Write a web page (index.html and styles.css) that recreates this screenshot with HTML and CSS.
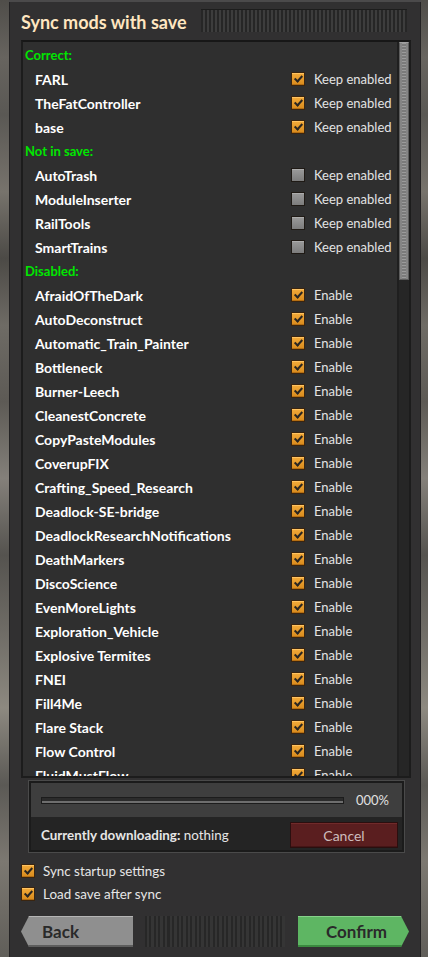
FILE: index.html
```html
<!DOCTYPE html>
<html>
<head>
<meta charset="utf-8">
<link rel="stylesheet" href="styles.css">
</head>
<body>
<div class="window">
  <div class="titlebar">
    <h1 class="title">Sync mods with save</h1>
    <div class="handle"></div>
  </div>
  <div class="list">
    <div class="rows">
      <div class="heading">Correct:</div>
      <div class="row"><span class="name">FARL</span><span class="cb on"></span><span class="label">Keep enabled</span></div>
      <div class="row"><span class="name">TheFatController</span><span class="cb on"></span><span class="label">Keep enabled</span></div>
      <div class="row"><span class="name">base</span><span class="cb on"></span><span class="label">Keep enabled</span></div>
      <div class="heading">Not in save:</div>
      <div class="row"><span class="name">AutoTrash</span><span class="cb"></span><span class="label">Keep enabled</span></div>
      <div class="row"><span class="name">ModuleInserter</span><span class="cb"></span><span class="label">Keep enabled</span></div>
      <div class="row"><span class="name">RailTools</span><span class="cb"></span><span class="label">Keep enabled</span></div>
      <div class="row"><span class="name">SmartTrains</span><span class="cb"></span><span class="label">Keep enabled</span></div>
      <div class="heading">Disabled:</div>
      <div class="row"><span class="name">AfraidOfTheDark</span><span class="cb on"></span><span class="label">Enable</span></div>
      <div class="row"><span class="name">AutoDeconstruct</span><span class="cb on"></span><span class="label">Enable</span></div>
      <div class="row"><span class="name">Automatic_Train_Painter</span><span class="cb on"></span><span class="label">Enable</span></div>
      <div class="row"><span class="name">Bottleneck</span><span class="cb on"></span><span class="label">Enable</span></div>
      <div class="row"><span class="name">Burner-Leech</span><span class="cb on"></span><span class="label">Enable</span></div>
      <div class="row"><span class="name">CleanestConcrete</span><span class="cb on"></span><span class="label">Enable</span></div>
      <div class="row"><span class="name">CopyPasteModules</span><span class="cb on"></span><span class="label">Enable</span></div>
      <div class="row"><span class="name">CoverupFIX</span><span class="cb on"></span><span class="label">Enable</span></div>
      <div class="row"><span class="name">Crafting_Speed_Research</span><span class="cb on"></span><span class="label">Enable</span></div>
      <div class="row"><span class="name">Deadlock-SE-bridge</span><span class="cb on"></span><span class="label">Enable</span></div>
      <div class="row"><span class="name">DeadlockResearchNotifications</span><span class="cb on"></span><span class="label">Enable</span></div>
      <div class="row"><span class="name">DeathMarkers</span><span class="cb on"></span><span class="label">Enable</span></div>
      <div class="row"><span class="name">DiscoScience</span><span class="cb on"></span><span class="label">Enable</span></div>
      <div class="row"><span class="name">EvenMoreLights</span><span class="cb on"></span><span class="label">Enable</span></div>
      <div class="row"><span class="name">Exploration_Vehicle</span><span class="cb on"></span><span class="label">Enable</span></div>
      <div class="row"><span class="name">Explosive Termites</span><span class="cb on"></span><span class="label">Enable</span></div>
      <div class="row"><span class="name">FNEI</span><span class="cb on"></span><span class="label">Enable</span></div>
      <div class="row"><span class="name">Fill4Me</span><span class="cb on"></span><span class="label">Enable</span></div>
      <div class="row"><span class="name">Flare Stack</span><span class="cb on"></span><span class="label">Enable</span></div>
      <div class="row"><span class="name">Flow Control</span><span class="cb on"></span><span class="label">Enable</span></div>
      <div class="row"><span class="name">FluidMustFlow</span><span class="cb on"></span><span class="label">Enable</span></div>
    </div>
    <div class="scrollbar"><div class="thumb"></div></div>
  </div>
  <div class="dl">
    <div class="dl-top">
      <div class="bar"></div>
      <span class="pct">000%</span>
    </div>
    <div class="dl-bottom">
      <span class="status"><b>Currently downloading:</b> nothing</span>
      <button class="cancel">Cancel</button>
    </div>
  </div>
  <div class="opts">
    <div class="opt"><span class="cb on"></span><span>Sync startup settings</span></div>
    <div class="opt"><span class="cb on"></span><span>Load save after sync</span></div>
  </div>
  <div class="buttons">
    <button class="btn back">Back</button>
    <div class="filler"></div>
    <button class="btn confirm">Confirm</button>
  </div>
</div>
</body>
</html>
```
FILE: styles.css
```css
html, body {
  margin: 0;
  padding: 0;
}
body {
  width: 428px;
  height: 957px;
  overflow: hidden;
  font-family: Lato, "Liberation Sans", sans-serif;
  background:
    linear-gradient(180deg,
      #4f4d49 0%, #67645f 6%, #5a5854 12%, #77736c 20%, #4c4a46 27%,
      #6e6b65 34%, #5d5a55 42%, #84807a 50%, #55534f 58%, #6f6c66 66%,
      #8d8980 74%, #5b5955 82%, #7c7871 90%, #605e59 100%);
}
.window {
  margin-left: 9px;
  width: 412px;
  height: 957px;
  box-sizing: border-box;
  background: #313031;
  border-top: 2px solid #4b4a4b;
  box-shadow: inset 1px 0 #232223, inset -1px 0 #232223;
  padding: 6px 10px 0 12px;
}
.titlebar {
  display: flex;
  align-items: center;
  height: 24px;
  gap: 14px;
}
.title {
  margin: 0;
  padding-top: 4px;
  font-size: 18px;
  font-weight: 700;
  color: #ffe6c0;
  line-height: 22px;
  white-space: nowrap;
}
.handle {
  flex: 1;
  height: 23px;
  margin-right: 4px;
  background: repeating-linear-gradient(90deg, #262626 0 2px, #3d3d3d 2px 4px);
  box-shadow: inset 0 1px #1d1d1d;
}
.list {
  margin-top: 8px;
  height: 738px;
  box-sizing: border-box;
  border: 2px solid #1c1c1c;
  border-top-color: #171717;
  background: #2f2f2f;
  display: flex;
  overflow: hidden;
}
.rows {
  flex: 1;
  padding-top: 1px;
  overflow: hidden;
}
.heading {
  height: 24px;
  line-height: 24px;
  padding-left: 2px;
  font-size: 13px;
  font-weight: 700;
  color: #00e600;
}
.row {
  height: 24px;
  display: flex;
  align-items: center;
  padding-left: 12px;
  font-size: 13px;
}
.name {
  width: 256px;
  font-size: 14px;
  font-weight: 700;
  color: #ffffff;
  white-space: nowrap;
}
.label {
  margin-left: 9px;
  color: #e3e3e3;
}
.cb {
  position: relative;
  width: 12px;
  height: 12px;
  flex: none;
  border: 1px solid #1f1a15;
  background: linear-gradient(180deg, #9a9a9a, #7c7c7c);
  box-shadow: inset 0 1px #adadad;
}
.cb.on {
  border-color: #3a2510;
  background: linear-gradient(180deg, #f3ab3a, #d88a1c);
  box-shadow: inset 0 1px #ffc360, inset 0 -1px #b56e12;
}
.cb.on::after {
  content: "";
  position: absolute;
  left: 4px;
  top: 1px;
  width: 3px;
  height: 6px;
  border-right: 2px solid #2a2622;
  border-bottom: 2px solid #2a2622;
  transform: rotate(42deg);
}
.scrollbar {
  width: 10px;
  flex: none;
  border-left: 2px solid #1f1f1f;
  background: #262626;
}
.thumb {
  height: 238px;
  box-sizing: border-box;
  border: 1px solid #5c5c5c;
  border-top-color: #a0a0a0;
  background: repeating-linear-gradient(180deg, #9b9b9b 0 1px, #7b7b7b 1px 3px);
  box-shadow: inset 2px 0 #858585, inset -2px 0 #858585;
}
.dl {
  margin: 2px 6px 0 7px;
  height: 73px;
  box-sizing: border-box;
  border: 1px solid #4a4a4a;
  padding: 2px;
  background: #1b1b1b;
}
.dl-top {
  height: 34px;
  background: #3e3e3e;
  display: flex;
  align-items: center;
  padding: 0 13px 0 10px;
}
.bar {
  flex: 1;
  height: 7px;
  box-sizing: border-box;
  border: 1px solid #1c1c1c;
  background: #2b2b2b;
  box-shadow: inset 0 -2px #6e6e6e;
}
.pct {
  margin-left: 12px;
  font-size: 13px;
  color: #e0e0e0;
}
.dl-bottom {
  height: 33px;
  box-sizing: border-box;
  background: #242424;
  display: flex;
  align-items: center;
  justify-content: space-between;
  padding: 3px 4px 0 10px;
}
.status {
  font-size: 13.4px;
  color: #e6e6e6;
}
.status b {
  font-weight: 700;
}
.cancel {
  width: 108px;
  height: 26px;
  border: 1px solid #2a0f0f;
  background: #5a1e1f;
  box-shadow: inset 0 1px #712a2a, inset 0 -1px #451516;
  color: #cdbdbd;
  font-family: Lato, "Liberation Sans", sans-serif;
  font-size: 14px;
  padding: 0;
}
.opts {
  margin-top: 6px;
}
.opt {
  height: 24px;
  display: flex;
  align-items: center;
  gap: 8px;
  font-size: 13.4px;
  color: #e6e6e6;
}
.opt + .opt {
  margin-top: -1px;
}
.buttons {
  margin-top: 10px;
  margin-right: 2px;
  height: 31px;
  display: flex;
}
.btn {
  height: 31px;
  border: none;
  padding: 0;
  font-family: Lato, "Liberation Sans", sans-serif;
  font-size: 17px;
  font-weight: 700;
  color: #2a2a2a;
}
.back {
  width: 112px;
  text-align: left;
  padding-left: 21px;
  background: #8f8f8f;
  box-shadow: inset 0 1px #b5b5b5, inset 0 -2px #5d5d5d;
  clip-path: polygon(8px 0, 100% 0, 100% 100%, 8px 100%, 0 50%);
}
.filler {
  flex: 1;
  margin: 0 13px 0 12px;
  background: repeating-linear-gradient(90deg, #272727 0 2px, #353535 2px 4.5px);
}
.confirm {
  width: 111px;
  padding-left: 6px;
  background: #5eb663;
  box-shadow: inset 0 1px #86d28a, inset 0 -2px #3a8a3f;
  clip-path: polygon(0 0, calc(100% - 8px) 0, 100% 50%, calc(100% - 8px) 100%, 0 100%);
}
```
